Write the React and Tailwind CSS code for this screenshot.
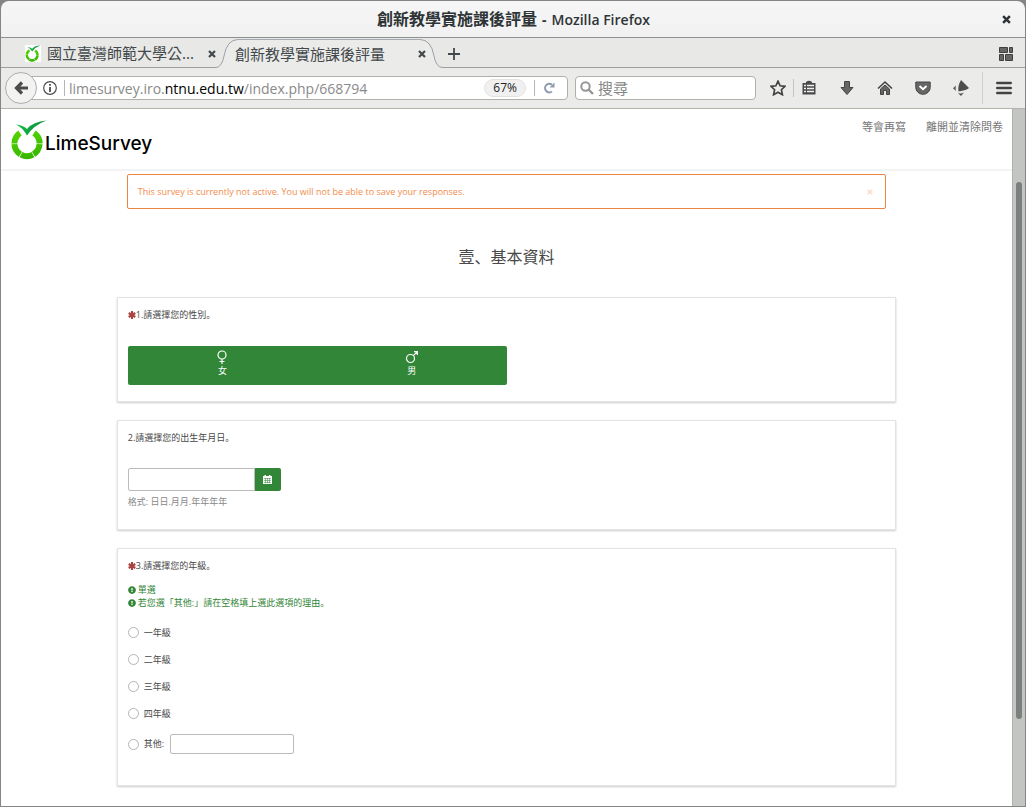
import React, { useState } from "react";
import { FaExclamationCircle } from "react-icons/fa";

const UI_FONT = "font-['Noto_Sans','Noto_Sans_CJK_TC',sans-serif]";

function Lime({ className }) {
  return (
    <svg viewBox="0 0 36 40" className={className} aria-hidden="true">
      <defs>
        <linearGradient id="ring" x1="0" y1="1" x2="1" y2="0">
          <stop offset="0" stopColor="#34b400" />
          <stop offset="1" stopColor="#55d800" />
        </linearGradient>
        <linearGradient id="leaf" x1="0" y1="0" x2="1" y2="0">
          <stop offset="0" stopColor="#1cc049" />
          <stop offset="0.5" stopColor="#10a040" />
          <stop offset="1" stopColor="#109a44" />
        </linearGradient>
      </defs>
      <circle
        cx="16"
        cy="23.500"
        r="12.600"
        fill="none"
        stroke="url(#ring)"
        strokeWidth="6"
        pathLength="360"
        strokeDasharray="56 3 56 3 56 3 56 3 56 68"
        transform="rotate(-56 16 23.500)"
      />
      <path d="M5 4.500Q12 5 16 9Q22 1.500 35.500.5Q23 5 16 15.500Q11 7 5 4.500Z" fill="url(#leaf)" stroke="#fff" strokeWidth="1" paintOrder="stroke" />
    </svg>
  );
}

function Close({ className = "w-2 h-2" }) {
  return (
    <svg viewBox="0 0 8 8" className={className} aria-hidden="true">
      <path d="M1 1L7 7M7 1L1 7" stroke="currentColor" strokeWidth="2.200" />
    </svg>
  );
}

function TitleBar() {
  return (
    <header className="box-content flex h-9 items-center border-b border-[#8e908d] bg-gradient-to-b from-[#f6f6f6] to-[#f1f1f1] pr-3.5 pl-6 text-[#2e3436]">
      <h1 className="flex flex-1 items-baseline justify-center gap-[5px] font-bold">
        <span className="text-[16px]">創新教學實施課後評量</span>
        <span className="text-[14px]">-</span>
        <span className="font-['Open_Sans',sans-serif] text-[14px] font-semibold">Mozilla Firefox</span>
      </h1>
      <button aria-label="關閉視窗"><Close className="h-[9px] w-[9px]" /></button>
    </header>
  );
}

function Tabs() {
  return (
    <div className="flex h-[30px] items-stretch bg-[#e8e8e7] text-[15px] text-[#43484a]">
      <div className="flex w-[215px] items-center gap-1.5 border-b border-[#9c9fa0] pt-0.5 pl-6">
        <Lime className="h-[17px] w-4 shrink-0 bg-white" />
        <span className="flex-1 whitespace-nowrap">國立臺灣師範大學公...</span>
        <button aria-label="關閉分頁"><Close /></button>
      </div>
      <div className="flex w-[226px] items-stretch">
        <svg viewBox="0 0 22 30" className="h-[30px] w-[22px] shrink-0" aria-hidden="true">
          <path d="M0 30Q6 29 8 18Q11 1.500 22 1.500V30Z" fill="#ebebea" />
          <path d="M0 29.500Q6 29 8 18Q11 1.500 22 1.500" fill="none" stroke="#9aa0a8" />
        </svg>
        <div className="mt-px flex flex-1 items-center border-t border-[#a5aab0] bg-[#ebebea]">
          <span className="-ml-[3px] flex-1 whitespace-nowrap">創新教學實施課後評量</span>
          <button aria-label="關閉分頁" className="z-10 -mr-1.5"><Close /></button>
        </div>
        <svg viewBox="0 0 22 30" className="h-[30px] w-[22px] shrink-0 -scale-x-100" aria-hidden="true">
          <path d="M0 30Q6 29 8 18Q11 1.500 22 1.500V30Z" fill="#ebebea" />
          <path d="M0 29.500Q6 29 8 18Q11 1.500 22 1.500" fill="none" stroke="#9aa0a8" />
        </svg>
      </div>
      <div className="flex flex-1 items-center justify-between border-b border-[#9c9fa0] pt-0.5 pr-3 pl-1.5">
        <button aria-label="開新分頁">
          <svg viewBox="0 0 12 12" className="h-3 w-3"><path d="M6 0V12M0 6H12" stroke="#43484a" strokeWidth="1.800" /></svg>
        </button>
        <button aria-label="分頁群組">
          <svg viewBox="0 0 14 14" className="h-3.5 w-3.5" fill="#666" stroke="#3f3f3f">
            <path d="M.5.5h8v5h-8zM10.500.5h3v5h-3zM.5 7.500h4v6h-4zM6.500 7.500h7v6h-7z" />
          </svg>
        </button>
      </div>
    </div>
  );
}

function Icon({ label, children }) {
  return (
    <button aria-label={label} className="flex h-4 w-4 items-center justify-center">
      <svg viewBox="0 0 16 16" className="h-4 w-4" fill="#666" stroke="#444">{children}</svg>
    </button>
  );
}

function Toolbar() {
  return (
    <nav className="flex h-[41px] items-center border-b border-[#b4b4ad] bg-[#ebebea] pr-[13px] pl-1">
      <button aria-label="上一頁" className="z-10 flex h-8 w-8 shrink-0 items-center justify-center rounded-full border border-[#adada9] bg-[#f3f3f2]">
        <svg viewBox="0 0 14 14" className="h-3.5 w-3.5"><path d="M8 1.500L2.500 7L8 12.500M3 7H14" fill="none" stroke="#4c4c4c" strokeWidth="3.200" /></svg>
      </button>
      <div className="-ml-2 flex h-6 flex-1 items-center rounded-r-sm border border-[#b0b0aa] bg-white pr-2 pl-[13px] font-['Open_Sans','Noto_Sans_CJK_TC',sans-serif] text-[14px]">
        <svg viewBox="0 0 14 14" className="h-3.5 w-3.5 shrink-0" aria-hidden="true">
          <circle cx="7" cy="7" r="6.300" fill="none" stroke="#4c4c4c" strokeWidth="1.200" />
          <path d="M7 6V11M7 3V4.800" stroke="#4c4c4c" strokeWidth="1.800" />
        </svg>
        <span className="mr-1 ml-[7px] h-4 w-px bg-[#b5b5b5]" />
        <div role="textbox" aria-label="網址" className="flex-1 whitespace-nowrap text-[#898989]">
          limesurvey.iro.<span className="text-black">ntnu.edu.tw</span>/index.php/668794
        </div>
        <button className="h-[18px] rounded-full border border-[#e2e2e2] bg-[#f0f0f0] px-2 text-[12px] leading-4 text-[#222]">67%</button>
        <span className="mx-2 h-4 w-px bg-[#b5b5b5]" />
        <button aria-label="重新載入" className="mr-1">
          <svg viewBox="0 0 12 12" className="h-3 w-3"><path d="M9 9.500A4.300 4.300 0 1 1 9 2.700" fill="none" stroke="#8f9cab" strokeWidth="2" /><path d="M11.500.5V5.500H6.500Z" fill="#8f9cab" /></svg>
        </button>
      </div>
      <label className="ml-[7px] flex h-6 w-[181px] items-center gap-1 rounded-sm border border-[#b0b0aa] bg-white px-1 text-[15px]">
        <svg viewBox="0 0 14 14" className="h-3.5 w-3.5 shrink-0" aria-hidden="true"><circle cx="5.500" cy="5.500" r="4.200" fill="none" stroke="#959595" strokeWidth="2" /><path d="M8.500 8.500L13 13" stroke="#959595" strokeWidth="2.400" /></svg>
        <input aria-label="搜尋" placeholder="搜尋" className="w-full min-w-0 outline-none placeholder:text-[#858585]" />
      </label>
      <div className="ml-3.5 flex items-center">
        <Icon label="加入書籤"><path d="M8 1.200L10.100 5.800L15 6.300L11.400 9.700L12.400 14.700L8 12.200L3.600 14.700L4.600 9.700L1 6.300L5.900 5.800Z" fill="none" strokeWidth="1.700" /></Icon>
        <span className="mx-[7px] h-[18px] w-px bg-[#c4c4c4]" />
        <div className="flex items-center gap-[22px]">
          <Icon label="書籤選單">
            <path d="M1.500 3H5V2Q8-.5 11 2V3H14.500V14.500H1.500Z" fill="#4a4a4a" stroke="none" />
            <path d="M3 5.500h2M6 5.500h7M3 8.500h2M6 8.500h7M3 11.500h2M6 11.500h7" stroke="#f0f0f0" strokeWidth="1.700" />
          </Icon>
          <Icon label="下載"><path d="M5.500 1.500H10.500V7.500H14L8 14.500L2 7.500H5.500Z" /></Icon>
          <Icon label="首頁"><path d="M1 8.500L8 2L15 8.500" fill="none" strokeWidth="1.600" /><path d="M3.500 9L8 5L12.500 9V14.500H9.500V10.500H6.500V14.500H3.500Z" /></Icon>
          <Icon label="Pocket"><path d="M.8 2H15.200V7.500A7.200 6.800 0 0 1 .8 7.500Z" /><path d="M4.500 6L8 9.300L11.500 6" fill="none" stroke="#fff" strokeWidth="1.900" /></Icon>
          <Icon label="附加元件"><path d="M8 0L16 8Q14 10 5.500 11.500Q4.500 6 8 0Z" stroke="none" fill="#4d4d4d" /><path d="M3 5.500Q2 8 3 11L0 8.200ZM5 13Q8 14 11 12.500L8 16Z" stroke="none" fill="#555" /></Icon>
        </div>
        <span className="mx-[13px] h-8 w-px bg-[#d0d0ce]" />
        <Icon label="選單"><path d="M1.300 3h13.400M1.300 8h13.400M1.300 13h13.400" strokeWidth="2.600" strokeLinecap="round" /></Icon>
      </div>
    </nav>
  );
}

function Card({ children, className = "" }) {
  return (
    <section className={`border border-[#e3e3e3] px-2.5 pt-2.5 shadow-[0_1px_2px_rgba(0,0,0,0.2)] ${className}`}>
      {children}
    </section>
  );
}

function Question({ required, children }) {
  return (
    <h3 className="flex items-center leading-[13px]">
      {required && (
        <svg viewBox="0 0 8 8" className="h-2 w-2 text-[#a94442]" role="img" aria-label="必填">
          <path d="M4 0V8M.7 2L7.300 6M7.300 2L.7 6" stroke="currentColor" strokeWidth="2.100" />
        </svg>
      )}
      {children}
    </h3>
  );
}

function Help({ children }) {
  return (
    <p className="flex items-center gap-0.5 leading-[13px] text-[#328637]">
      <FaExclamationCircle className="h-2 w-2" />
      {children}
    </p>
  );
}

const radioClass = "h-[11px] w-[11px] shrink-0 appearance-none rounded-full border border-[#b5b5b5] bg-white checked:bg-[#328637]";

function Survey() {
  const [gender, setGender] = useState("");
  const [alert, setAlert] = useState(true);
  return (
    <main className="min-w-0 flex-1 bg-white pb-[19px] font-['Open_Sans','Noto_Sans_CJK_SC',sans-serif] text-[9px] text-[#484848]">
      <div className="flex h-[62px] items-start justify-between border-b-2 border-[#f3f3f3] pr-[9px] pl-2.5">
        <a href="#home" className="mt-[11px] flex items-end text-black">
          <Lime className="h-10 w-9" />
          <span className="-ml-0.5 font-['Inter',sans-serif] text-[19px] leading-8 font-medium">LimeSurvey</span>
        </a>
        <div className="mt-2.5 flex gap-5 text-[11px] leading-4 text-[#777]">
          <a href="#later">等會再寫</a>
          <a href="#exit">離開並清除問卷</a>
        </div>
      </div>
      <div className="mx-auto w-[77.1%]">
        {alert && (
          <div role="alert" className="mx-2.5 mt-[3px] flex h-[35px] items-center justify-between rounded-xs border border-[#eb8541] pr-3 pl-2.5 text-[#f28c4b]">
            <span>This survey is currently not active. You will not be able to save your responses.</span>
            <button aria-label="關閉" className="text-[#fbdcc8]" onClick={() => setAlert(false)}><Close className="h-1.5 w-1.5" /></button>
          </div>
        )}
        <h2 className="mt-9 text-center text-[16px] leading-6">壹、基本資料</h2>
        <div className="mt-7 flex flex-col gap-[18px]">
          <Card className="pb-4">
            <Question required>1.請選擇您的性別。</Question>
            <div className="mt-[25px] flex h-[39px] w-1/2 overflow-hidden rounded-xs bg-[#328637] text-white">
              <button aria-pressed={gender === "f"} onClick={() => setGender("f")} className="flex flex-1 flex-col items-center pt-1 leading-[13px]">
                <svg viewBox="0 0 14 14" className="h-3.5 w-3.5" fill="none" stroke="currentColor" strokeWidth="1.200"><circle cx="7" cy="5" r="4" /><path d="M7 9V14M4.500 11.500H9.500" /></svg>
                女
              </button>
              <button aria-pressed={gender === "m"} onClick={() => setGender("m")} className="flex flex-1 flex-col items-center pt-1 leading-[13px]">
                <svg viewBox="0 0 14 14" className="h-3.5 w-3.5" fill="none" stroke="currentColor" strokeWidth="1.200"><circle cx="5.500" cy="8.500" r="4" /><path d="M8.300 5.700L12 2M9 1.700H12.400V5" /></svg>
                男
              </button>
            </div>
          </Card>
          <Card className="pb-[21px]">
            <Question>2.請選擇您的出生年月日。</Question>
            <div className="mt-6 flex h-[23px] w-[153px]">
              <input aria-label="請選擇您的出生年月日" className="min-w-0 flex-1 rounded-l-xs border border-[#bbb] px-1 outline-none" />
              <button aria-label="選擇日期" className="flex w-[26px] items-center justify-center rounded-r-xs bg-[#328637] text-white">
                <svg viewBox="0 0 9 9" className="h-[9px] w-[9px]"><path d="M0 1H1.500V0H3V1H6V0H7.500V1H9V9H0Z" fill="currentColor" /><path d="M1 3.500H8M1 5.500H8M1 7.500H8M2.500 3V8.300M4.500 3V8.300M6.500 3V8.300" stroke="#328637" strokeWidth=".5" /></svg>
              </button>
            </div>
            <p className="mt-1 leading-[13px] text-[#888]">格式: 日日.月月.年年年年</p>
          </Card>
          <Card className="pb-[31px]">
            <Question required>3.請選擇您的年級。</Question>
            <div className="mt-[11px]">
              <Help>單選</Help>
              <Help>若您選「其他:」請在空格填上選此選項的理由。</Help>
            </div>
            <div className="mt-2.5">
              {["一年級", "二年級", "三年級", "四年級"].map((g) => (
                <label key={g} className="flex h-[27px] items-center gap-[5px]">
                  <input type="radio" name="grade" className={radioClass} />
                  {g}
                </label>
              ))}
              <div className="mt-[7px] flex h-5 items-center">
                <label className="flex items-center gap-[5px]">
                  <input type="radio" name="grade" className={radioClass} />
                  其他:
                </label>
                <input aria-label="其他" className="ml-1.5 h-5 w-[124px] rounded-xs border border-[#bbb] px-1 outline-none" />
              </div>
            </div>
          </Card>
        </div>
      </div>
    </main>
  );
}

export default function App() {
  return (
    <div className={`flex min-h-screen flex-col bg-[#858585] p-px ${UI_FONT}`}>
      <div className="flex flex-1 flex-col overflow-hidden rounded-t-lg">
        <TitleBar />
        <Tabs />
        <Toolbar />
        <div className="flex flex-1">
          <Survey />
          <div className="flex w-[13px] flex-col items-center border-l border-[#afb1af] bg-[#c3c5c3]">
            <div className="h-[10.5%] shrink-0" />
            <div className="h-[77%] w-1.5 rounded-full bg-[#7b7f7d]" />
          </div>
        </div>
      </div>
    </div>
  );
}
